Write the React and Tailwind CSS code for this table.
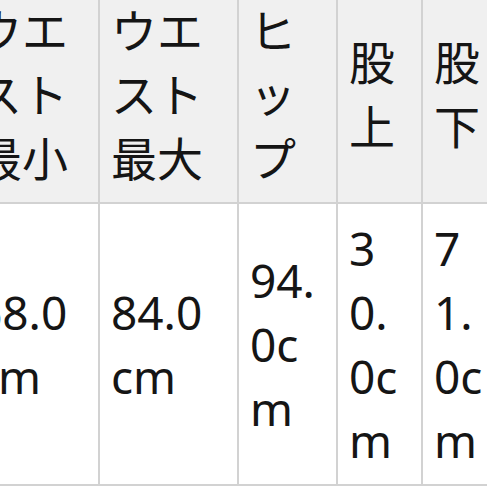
const headers = [
    ["ウエ", "スト", "最小"],
    ["ウエ", "スト", "最大"],
    ["ヒ", "ッ", "プ"],
    ["股", "上"],
    ["股", "下"],
];

const values = [
    ["68.0", "cm"],
    ["84.0", "cm"],
    ["94.", "0c", "m"],
    ["3", "0.", "0c", "m"],
    ["7", "1.", "0c", "m"],
];

const Cell = ({ lines, head }) => (
    <div
        className={
            "flex flex-col justify-center pl-[11px] pr-2 py-3 border-r-2 border-b-2 border-[#d2d2d2] " +
            (head ? "bg-[#f0f0f0]" : "bg-white")
        }
    >
        {lines.map((line, i) => (
            <span key={i} className="block whitespace-nowrap">
                {line}
            </span>
        ))}
    </div>
);

export default function App() {
    return (
        <div className="w-[487px] h-[487px] overflow-hidden bg-white">
            <div
                className="grid grid-cols-[135px_139px_99px_85px_85px] w-max -ml-[37px] -mt-[16px] border-t-2 border-l-2 border-[#d2d2d2] text-[46px] leading-[64px] text-[#151515]"
                style={{ fontFamily: '"Noto Sans", "Noto Sans CJK JP", sans-serif' }}
            >
                {headers.map((h, i) => (
                    <Cell key={"h" + i} lines={h} head />
                ))}
                {values.map((v, i) => (
                    <Cell key={"v" + i} lines={v} />
                ))}
            </div>
        </div>
    );
}
